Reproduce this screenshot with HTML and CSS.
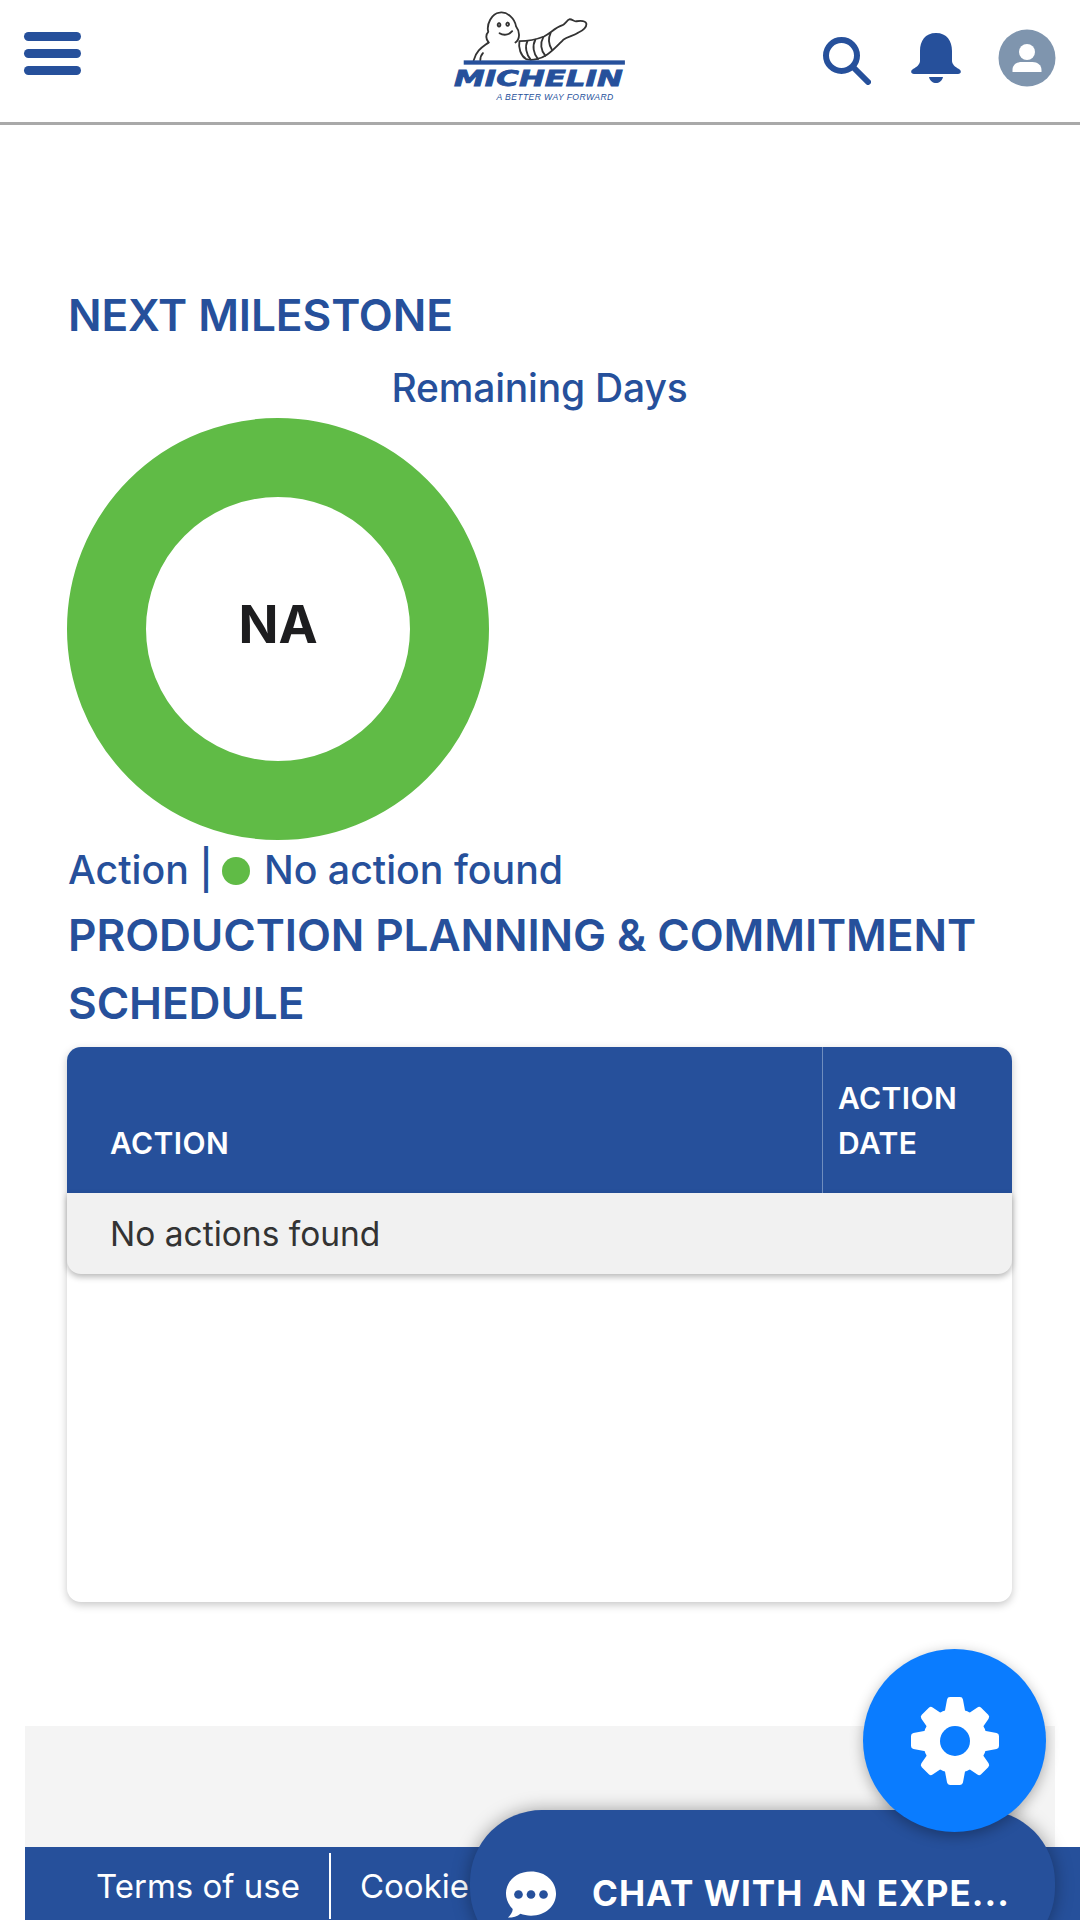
FILE: index.html
```html
<!DOCTYPE html>
<html lang="en">
<head>
<meta charset="utf-8">
<title>Michelin</title>
<link rel="stylesheet" href="styles.css">
</head>
<body>
<div class="page">
  <header class="topbar">
    <div class="menu" aria-label="Menu"><span></span><span></span><span></span></div>
    <div class="logo">
      <svg class="bibendum" viewBox="15 0 690 196" fill="none" stroke="#333" stroke-width="5.5" stroke-linecap="round" stroke-linejoin="round">
        <path d="M205 128C190 140 168 150 160 182M188 160C182 166 180 174 180 182"/>
        <path d="M205 128C196 118 196 104 204 96C198 74 214 40 238 38C262 34 284 56 288 80C300 96 300 118 286 128"/>
        <path d="M236 70a4 5 0 1 0 1 0M262 68a4 5 0 1 0 1 0M238 100c12 8 28 6 38-6"/>
        <path fill="#fff" d="M298 124C320 124 352 118 372 110C392 100 404 84 428 76C436 72 442 60 450 58C458 58 462 66 470 64C484 62 498 64 500 72C500 84 488 92 476 98C462 108 444 110 430 120C416 134 400 152 382 164C362 178 336 184 318 178C302 168 294 144 298 124Z"/>
        <path d="M322 124C314 140 318 164 332 180M346 120C336 138 340 162 354 178M370 112C360 130 362 152 376 168M392 100C384 116 386 134 396 150"/>
        <rect x="130" y="182" width="486" height="13" fill="#26509b" stroke="none"/>
      </svg>
      <div class="logo-name">MICHELIN</div>
      <div class="logo-tag">A BETTER WAY FORWARD</div>
    </div>
    <div class="tools">
      <svg class="icon-search" viewBox="0 0 48 48" fill="none" stroke="#26509b" stroke-width="6" stroke-linecap="round"><circle cx="18.5" cy="18.5" r="15.5"/><path d="M30 30l15 15"/></svg>
      <svg class="icon-bell" viewBox="0 0 50 50" fill="#26509b"><path d="M25 0C14 0 9 8 9 18v10c0 3-3 6-7 8c-3 2-2 5 1 5h44c3 0 4-3 1-5c-4-2-7-5-7-8V18C41 8 36 0 25 0z"/><path d="M18 44h14c-1 4-4 6-7 6s-6-2-7-6z"/></svg>
      <svg class="icon-user" viewBox="0 0 58 58"><circle cx="29" cy="29" r="28.5" fill="#7f95ae"/><circle cx="29" cy="23" r="8" fill="#fff"/><path d="M14.500 43v-2c0-5 4-8 9-8h11c5 0 9 3 9 8v2z" fill="#fff"/></svg>
    </div>
  </header>

  <main class="content">
    <h2 class="section-title">NEXT MILESTONE</h2>
    <div class="chart-title">Remaining Days</div>
    <div class="donut"><span>NA</span></div>
    <div class="status">Action | <i class="dot"></i> No action found</div>
    <h2 class="section-title">PRODUCTION PLANNING &amp; COMMITMENT SCHEDULE</h2>
    <section class="card">
      <div class="table-head">
        <div class="cell-action">ACTION</div>
        <div class="cell-date">ACTION DATE</div>
      </div>
      <div class="table-row">No actions found</div>
    </section>
  </main>

  <div class="foot-grey"></div>
  <footer class="foot-bar">
    <span class="foot-link">Terms of use</span>
    <span class="foot-sep"></span>
    <span class="foot-link">Cookie</span>
  </footer>

  <button class="chat">
    <svg class="chat-icon" viewBox="0 0 54 48"><path fill="#fff" d="M27 0C12 0 1 10 1 23c0 6 3 12 7 16c0 3-2 6-5 9c5 0 10-1 13-4c3 1 7 2 11 2c15 0 26-10 26-23S42 0 27 0z"/><circle cx="14" cy="24" r="4.500" fill="#26509b"/><circle cx="27" cy="24" r="4.500" fill="#26509b"/><circle cx="40" cy="24" r="4.500" fill="#26509b"/></svg>
    <span>CHAT WITH AN EXPE...</span>
  </button>

  <button class="fab">
    <svg viewBox="-46 -46 92 92" class="gear" fill="#fff" stroke="#fff" stroke-width="6" stroke-linejoin="round">
      <circle r="29"/>
      <path d="M-5-41H5L8-25H-8Z"/>
      <path d="M-5-41H5L8-25H-8Z" transform="rotate(45) translate(0 2)"/>
      <path d="M-5-41H5L8-25H-8Z" transform="rotate(90)"/>
      <path d="M-5-41H5L8-25H-8Z" transform="rotate(135) translate(0 2)"/>
      <path d="M-5-41H5L8-25H-8Z" transform="rotate(180)"/>
      <path d="M-5-41H5L8-25H-8Z" transform="rotate(225) translate(0 2)"/>
      <path d="M-5-41H5L8-25H-8Z" transform="rotate(270)"/>
      <path d="M-5-41H5L8-25H-8Z" transform="rotate(315) translate(0 2)"/>
      <circle r="15" fill="#0a7cff" stroke="none"/>
    </svg>
  </button>
</div>
</body>
</html>
```
FILE: styles.css
```css
* { box-sizing: border-box; }
html, body { margin: 0; padding: 0; }
body { font-family: Inter, "Noto Sans", sans-serif; background: #fff; color: #26509b; }

.page {
  position: relative;
  width: 1080px;
  height: 1920px;
  overflow: hidden;
  display: flex;
  flex-direction: column;
}

/* Top bar */
.topbar {
  flex: none;
  height: 125px;
  border-bottom: 3px solid #a9a9a9;
  display: grid;
  grid-template-columns: 1fr auto 1fr;
  align-items: start;
  padding: 0 24px;
}
.menu { display: flex; flex-direction: column; gap: 8px; width: 57px; padding-top: 32px; }
.menu span { display: block; height: 9px; border-radius: 5px; background: #26509b; }

.logo { display: flex; flex-direction: column; align-items: center; width: 230px; }
.bibendum { display: block; width: 230px; height: 65px; flex: none; }
.logo-name {
  margin: 3px 0 0 -3px;
  font: italic 700 21px/22px "DejaVu Sans", sans-serif;
  color: #26509b;
  -webkit-text-stroke: .8px #26509b;
  transform: scaleX(1.47);
}
.logo-tag {
  margin: 3px 0 0 30px;
  font: italic 400 8.6px/9px "Liberation Sans", sans-serif;
  letter-spacing: .4px;
  color: #26509b;
}

.tools { display: flex; justify-content: flex-end; align-items: flex-start; padding-top: 29px; }
.icon-search { width: 48px; height: 48px; margin: 8px 2px 0 0; display: block; flex: none; }
.icon-bell { width: 50px; height: 50px; margin: 4px 0 0 38px; display: block; flex: none; }
.icon-user { width: 58px; height: 58px; margin-left: 37px; display: block; flex: none; }

/* Main content */
.content { flex: 1 1 auto; padding: 156px 68px 0 67px; }
.section-title { margin: 0; padding-left: 1px; font-size: 44.2px; line-height: 68px; font-weight: 600; color: #26509b; letter-spacing: -.1px; }
.chart-title { margin-top: 17px; height: 44px; font-size: 39px; line-height: 44px; text-align: center; font-weight: 500; letter-spacing: -.2px; }
.donut {
  margin-top: 8px;
  width: 422px;
  height: 422px;
  border: 79px solid #60bb46;
  border-radius: 50%;
  display: flex;
  align-items: center;
  justify-content: center;
}
.donut span { font-size: 52.500px; font-weight: 700; color: #1d1d1f; margin-top: -10px; }
.status { margin-top: 8px; padding-left: 1px; font-size: 39.300px; line-height: 44px; font-weight: 500; }
.dot { display: inline-block; width: 28px; height: 28px; border-radius: 50%; background: #60bb46; vertical-align: -1px; margin: 0 3px 0 -1px; }
.status + .section-title { margin-top: 9px; }

/* Table card */
.card {
  margin-top: 10px;
  height: 555px;
  border-radius: 14px;
  background: #fff;
  box-shadow: 0 3px 8px rgba(0,0,0,.22);
}
.table-head {
  height: 146px;
  display: flex;
  background: #26509b;
  border-radius: 14px 14px 0 0;
  color: #fff;
  font-size: 30px;
  line-height: 45px;
  font-weight: 600;
  letter-spacing: .4px;
}
.cell-action { flex: 1 1 auto; padding: 0 0 27px 43px; display: flex; align-items: flex-end; }
.cell-date { flex: none; width: 190px; padding: 29px 30px 0 15px; border-left: 1px solid #6f8dbe; }
.table-row {
  height: 81px;
  background: #f1f1f1;
  border-radius: 0 0 14px 14px;
  box-shadow: 0 3px 6px rgba(0,0,0,.28);
  padding-left: 43px;
  font-size: 33.500px;
  line-height: 82px;
  color: #333;
}

/* Footer */
.foot-grey { flex: none; height: 121px; margin: 0 25px; background: #f4f4f4; }
.foot-bar {
  flex: none;
  height: 73px;
  margin-left: 25px;
  background: #26509b;
  color: #fff;
  display: flex;
  align-items: flex-start;
  padding: 6px 0 0 71px;
  font-size: 33px;
  line-height: 66px;
  white-space: nowrap;
}
.foot-link { display: block; }
.foot-sep { width: 2px; height: 66px; background: #fff; margin: 0 29px; }

/* Floating */
button { font: inherit; border: 0; padding: 0; margin: 0; }
.chat {
  position: absolute;
  left: 470px;
  top: 1810px;
  width: 585px;
  height: 150px;
  border-radius: 72px;
  background: #26509b;
  color: #fff;
  box-shadow: 0 0 18px rgba(0,0,0,.35);
  display: flex;
  align-items: flex-start;
  padding: 61px 0 0 35px;
  font-size: 35px;
  line-height: 44px;
  font-weight: 700;
  letter-spacing: 1px;
  white-space: nowrap;
}
.chat-icon { width: 52px; height: 47px; margin-right: 35px; flex: none; }
.fab {
  position: absolute;
  left: 863px;
  top: 1649px;
  width: 183px;
  height: 183px;
  border-radius: 50%;
  background: #0a7cff;
  box-shadow: 0 4px 14px rgba(0,0,0,.3);
  display: flex;
  align-items: center;
  justify-content: center;
}
.gear { width: 92px; height: 92px; display: block; }
```
